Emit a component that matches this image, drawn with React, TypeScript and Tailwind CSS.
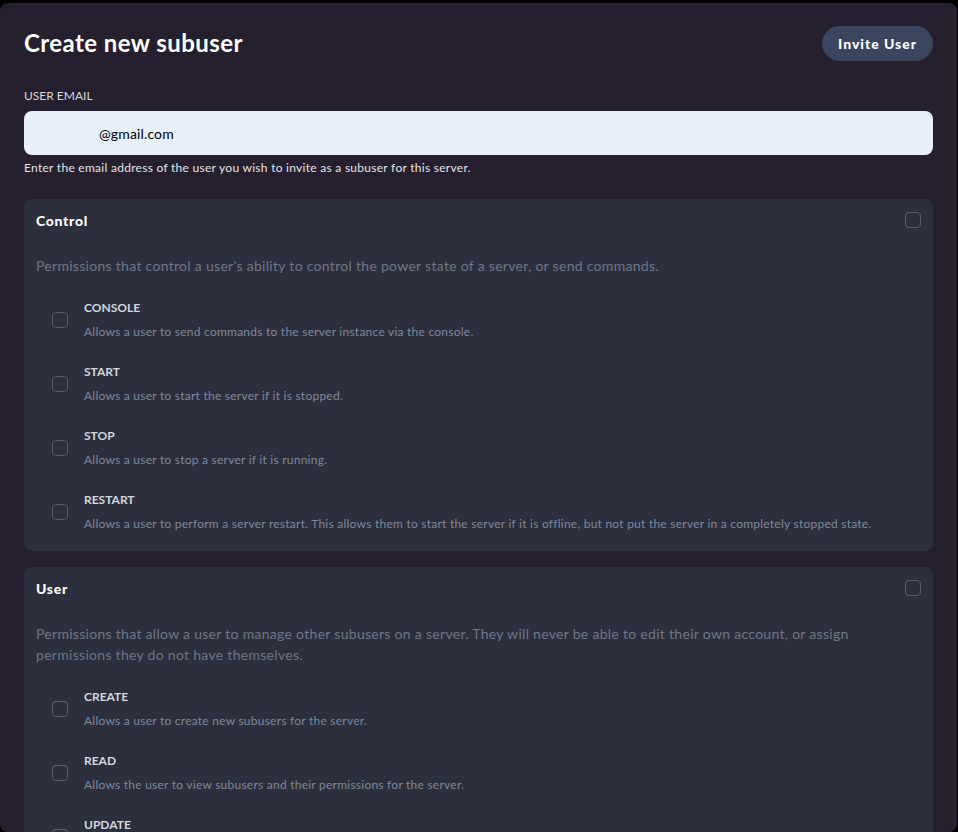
import React from "react";

type Perm = { name: string; desc: string };

const groups: { title: string; desc: string; perms: Perm[] }[] = [
  {
    title: "Control",
    desc: "Permissions that control a user's ability to control the power state of a server, or send commands.",
    perms: [
      { name: "CONSOLE", desc: "Allows a user to send commands to the server instance via the console." },
      { name: "START", desc: "Allows a user to start the server if it is stopped." },
      { name: "STOP", desc: "Allows a user to stop a server if it is running." },
      {
        name: "RESTART",
        desc: "Allows a user to perform a server restart. This allows them to start the server if it is offline, but not put the server in a completely stopped state.",
      },
    ],
  },
  {
    title: "User",
    desc: "Permissions that allow a user to manage other subusers on a server. They will never be able to edit their own account, or assign permissions they do not have themselves.",
    perms: [
      { name: "CREATE", desc: "Allows a user to create new subusers for the server." },
      { name: "READ", desc: "Allows the user to view subusers and their permissions for the server." },
      { name: "UPDATE", desc: "Allows a user to modify other subusers." },
      { name: "DELETE", desc: "Allows a user to delete a subuser from the server." },
    ],
  },
];

function Box() {
  return <div className="w-4 h-4 shrink-0 rounded-[4px] border border-[#585d6d] bg-[#2c2f3d]" />;
}

export default function App() {
  const body = { fontFamily: "Lato, 'Noto Sans', sans-serif" };
  return (
    <div className="bg-black w-[958px] h-[832px] pt-[3px] overflow-hidden" style={body}>
      <div className="w-[957px] h-[829px] rounded-lg bg-[#251f2e] overflow-hidden px-6 pt-[20px]">
        <div className="flex items-center justify-between h-[40px]">
          <h1 className="text-[24px] font-bold text-white leading-none tracking-[0.018em]">Create new subuser</h1>
          <button className="h-[35px] px-4 rounded-full bg-[#3a4560] text-[14px] font-black text-white tracking-[0.07em]">
            Invite User
          </button>
        </div>
        <div className="mt-[25px] text-[12px] leading-4 text-[#d6d8de]">USER EMAIL</div>
        <div className="mt-[7px] h-[44px] rounded-lg bg-[#e8f0fe] flex items-center pl-[75px] text-[14px] text-black tracking-[0.01em]">
          @gmail.com
        </div>
        <div className="mt-[5px] text-[12px] leading-4 text-[#e4e6ea] tracking-[0.023em]">
          Enter the email address of the user you wish to invite as a subuser for this server.
        </div>
        <div className="mt-[23px] flex flex-col gap-4">
          {groups.map((g) => (
            <div key={g.title} className="rounded-lg bg-[#2c2f3d] px-3 pt-3 pb-[7px]">
              <div className="flex items-center justify-between h-[18px]">
                <span className="text-[14px] font-black text-white tracking-[0.05em]">{g.title}</span>
                <Box />
              </div>
              <p className="mt-[26px] text-[14px] leading-[21px] text-[#6f7687] tracking-[0.021em]">{g.desc}</p>
              <div className="mt-[12px]">
                {g.perms.map((p) => (
                  <div key={p.name} className="flex items-center px-4 py-3 gap-4">
                    <Box />
                    <div>
                      <div className="text-[12px] leading-4 font-bold text-[#d4d7de]">{p.name}</div>
                      <div className="mt-2 text-[12px] leading-4 text-[#7f889b] tracking-[0.02em]">{p.desc}</div>
                    </div>
                  </div>
                ))}
              </div>
            </div>
          ))}
        </div>
      </div>
    </div>
  );
}
